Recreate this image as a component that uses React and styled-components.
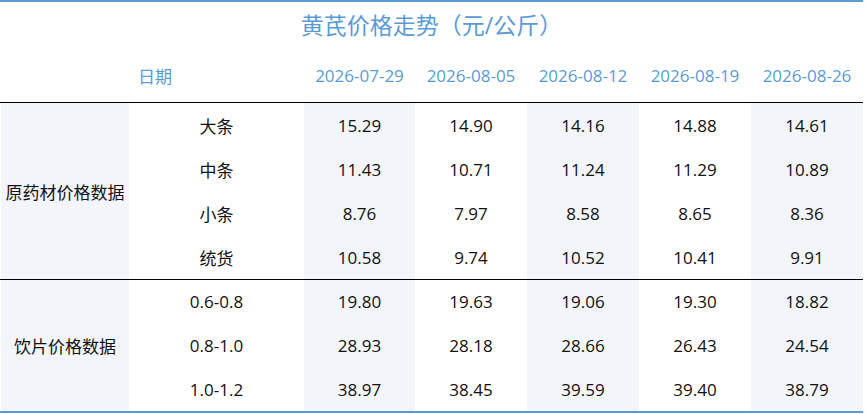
import styled, {createGlobalStyle} from 'styled-components';

const GlobalStyle = createGlobalStyle`
  body {
    margin: 0;
    background: #fff;
    font-family: "Open Sans", "Noto Sans CJK SC", sans-serif;
  }
`;

const COLS = '128px 175px 111px 112px 112px 112px 112px';

const Board = styled.div`
  width: 863px;
  border-top: 2px solid #5b9bd5;
  border-bottom: 2px solid #5b9bd5;
`;

const Title = styled.h1`
  margin: 0;
  height: 46px;
  line-height: 46px;
  text-align: center;
  font-size: 23px;
  font-weight: normal;
  color: #5b9bd5;
`;

const HeadRow = styled.div`
  display: grid;
  grid-template-columns: ${COLS};
  height: 54px;
  padding-left: 1px;
  align-items: center;
  font-size: 17px;
  color: #5b9bd5;
  border-bottom: 1px solid #000;
`;

const HeadCell = styled.div`
  text-align: ${props => props.$left ? 'left' : 'center'};
  padding-left: ${props => props.$left ? '9px' : '0'};
`;

const Section = styled.div`
  display: grid;
  grid-template-columns: ${COLS};
  grid-template-rows: repeat(${props => props.$rows}, 1fr);
  height: ${props => props.$height}px;
  padding-left: 1px;
  font-size: 17px;
  color: #111;
  border-bottom: ${props => props.$last ? 'none' : '1px solid #000'};
`;

const Label = styled.div`
  grid-row: 1 / span ${props => props.$rows};
  display: flex;
  align-items: center;
  justify-content: center;
  background: #f2f5fa;
`;

const Cell = styled.div`
  display: flex;
  align-items: center;
  justify-content: center;
  background: ${props => props.$shade ? '#f2f5fa' : '#fff'};
`;

const dates = ['2026-07-29', '2026-08-05', '2026-08-12', '2026-08-19', '2026-08-26'];

const sections = [
  {
    label: '原药材价格数据',
    height: 176,
    rows: [
      ['大条', '15.29', '14.90', '14.16', '14.88', '14.61'],
      ['中条', '11.43', '10.71', '11.24', '11.29', '10.89'],
      ['小条', '8.76', '7.97', '8.58', '8.65', '8.36'],
      ['统货', '10.58', '9.74', '10.52', '10.41', '9.91'],
    ],
  },
  {
    label: '饮片价格数据',
    height: 131,
    rows: [
      ['0.6-0.8', '19.80', '19.63', '19.06', '19.30', '18.82'],
      ['0.8-1.0', '28.93', '28.18', '28.66', '26.43', '24.54'],
      ['1.0-1.2', '38.97', '38.45', '39.59', '39.40', '38.79'],
    ],
  },
];

export default function App() {
  return (
    <Board>
      <GlobalStyle />
      <Title>黄芪价格走势（元/公斤）</Title>
      <HeadRow>
        <div />
        <HeadCell $left>日期</HeadCell>
        {dates.map(d => <HeadCell key={d}>{d}</HeadCell>)}
      </HeadRow>
      {sections.map((s, si) => (
        <Section key={s.label} $rows={s.rows.length} $height={s.height} $last={si === sections.length - 1}>
          <Label $rows={s.rows.length}>{s.label}</Label>
          {s.rows.map(row => row.map((v, i) => (
            <Cell key={row[0] + i} $shade={i % 2 === 1}>{v}</Cell>
          )))}
        </Section>
      ))}
    </Board>
  );
}
